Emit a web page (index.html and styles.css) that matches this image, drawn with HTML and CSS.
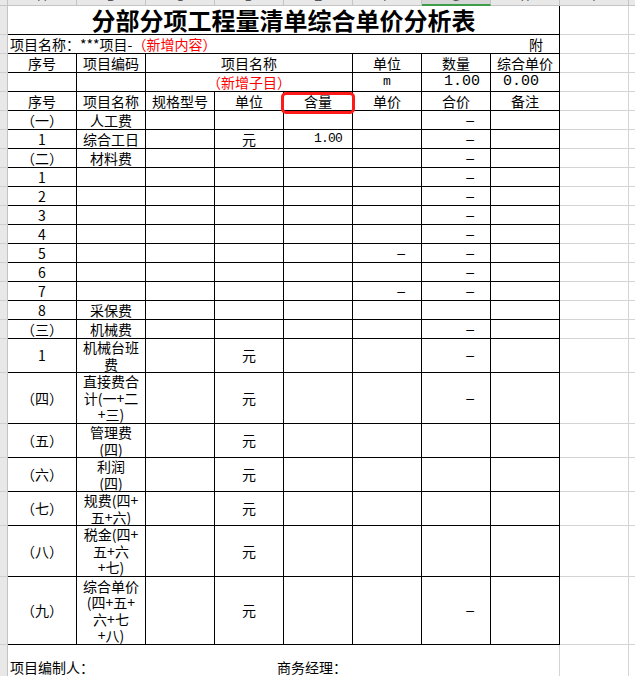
FILE: index.html
```html
<!DOCTYPE html>
<html lang="zh-CN">
<head>
<meta charset="utf-8">
<title>分部分项工程量清单综合单价分析表</title>
<link rel="stylesheet" href="styles.css">
</head>
<body>
<div class="colhead">
  <div class="corner"></div>
  <div class="ch"><span>A</span></div>
  <div class="ch"><span>B</span></div>
  <div class="ch"><span>C</span></div>
  <div class="ch"><span>D</span></div>
  <div class="ch"><span>E</span></div>
  <div class="ch"><span>F</span></div>
  <div class="ch sel"><span>G</span></div>
  <div class="ch"><span>H</span></div>
  <div class="ch"><span>I</span></div>
  <div class="ch last"><span>J</span></div>
</div>
<table class="grid">
  <colgroup>
    <col class="c-rh">
    <col class="c"><col class="c"><col class="c"><col class="c">
    <col class="c"><col class="c"><col class="c"><col class="c">
    <col class="c"><col class="c-rest">
  </colgroup>
  <tbody>
    <tr class="h28"><td class="rh"></td><td colspan="8" class="title">分部分项工程量清单综合单价分析表</td><td class="gx"></td><td class="gy"></td></tr>
    <tr class="h19"><td class="rh"></td><td colspan="8" class="left"><div class="projline"><span>项目名称：***项目-<span class="red">（新增内容）</span></span><span class="fu">附</span></div></td><td class="gx"></td><td class="gy"></td></tr>
    <tr class="h19"><td class="rh"></td><td>序号</td><td>项目编码</td><td colspan="3">项目名称</td><td>单位</td><td>数量</td><td>综合单价</td><td class="gx"></td><td class="gy"></td></tr>
    <tr class="h19"><td class="rh"></td><td></td><td></td><td colspan="3" class="red">（新增子目）</td><td class="unit">m</td><td class="num lg">1.00</td><td class="num lg wide">0.00</td><td class="gx"></td><td class="gy"></td></tr>
    <tr class="h19"><td class="rh"></td><td>序号</td><td>项目名称</td><td>规格型号</td><td>单位</td><td>含量</td><td>单价</td><td>合价</td><td>备注</td><td class="gx"></td><td class="gy"></td></tr>
    <tr class="h19"><td class="rh"></td><td>（一）</td><td>人工费</td><td></td><td></td><td></td><td></td><td class="dash">–</td><td></td><td class="gx"></td><td class="gy"></td></tr>
    <tr class="h19"><td class="rh"></td><td>1</td><td>综合工日</td><td></td><td>元</td><td class="num">1.00</td><td></td><td class="dash">–</td><td></td><td class="gx"></td><td class="gy"></td></tr>
    <tr class="h19"><td class="rh"></td><td>（二）</td><td>材料费</td><td></td><td></td><td></td><td></td><td class="dash">–</td><td></td><td class="gx"></td><td class="gy"></td></tr>
    <tr class="h19"><td class="rh"></td><td>1</td><td></td><td></td><td></td><td></td><td></td><td class="dash">–</td><td></td><td class="gx"></td><td class="gy"></td></tr>
    <tr class="h19"><td class="rh"></td><td>2</td><td></td><td></td><td></td><td></td><td></td><td class="dash">–</td><td></td><td class="gx"></td><td class="gy"></td></tr>
    <tr class="h19"><td class="rh"></td><td>3</td><td></td><td></td><td></td><td></td><td></td><td class="dash">–</td><td></td><td class="gx"></td><td class="gy"></td></tr>
    <tr class="h19"><td class="rh"></td><td>4</td><td></td><td></td><td></td><td></td><td></td><td class="dash">–</td><td></td><td class="gx"></td><td class="gy"></td></tr>
    <tr class="h19"><td class="rh"></td><td>5</td><td></td><td></td><td></td><td></td><td class="dash">–</td><td class="dash">–</td><td></td><td class="gx"></td><td class="gy"></td></tr>
    <tr class="h19"><td class="rh"></td><td>6</td><td></td><td></td><td></td><td></td><td></td><td class="dash">–</td><td></td><td class="gx"></td><td class="gy"></td></tr>
    <tr class="h19"><td class="rh"></td><td>7</td><td></td><td></td><td></td><td></td><td class="dash">–</td><td class="dash">–</td><td></td><td class="gx"></td><td class="gy"></td></tr>
    <tr class="h19"><td class="rh"></td><td>8</td><td>采保费</td><td></td><td></td><td></td><td></td><td></td><td></td><td class="gx"></td><td class="gy"></td></tr>
    <tr class="h19"><td class="rh"></td><td>（三）</td><td>机械费</td><td></td><td></td><td></td><td></td><td class="dash">–</td><td></td><td class="gx"></td><td class="gy"></td></tr>
    <tr class="h34"><td class="rh"></td><td>1</td><td>机械台班<br>费</td><td></td><td>元</td><td></td><td></td><td class="dash">–</td><td></td><td class="gx"></td><td class="gy"></td></tr>
    <tr class="h51"><td class="rh"></td><td>（四）</td><td>直接费合<br>计(一+二<br>+三)</td><td></td><td>元</td><td></td><td></td><td class="dash">–</td><td></td><td class="gx"></td><td class="gy"></td></tr>
    <tr class="h34"><td class="rh"></td><td>（五）</td><td>管理费<br>(四)</td><td></td><td>元</td><td></td><td></td><td></td><td></td><td class="gx"></td><td class="gy"></td></tr>
    <tr class="h34"><td class="rh"></td><td>（六）</td><td>利润<br>(四)</td><td></td><td>元</td><td></td><td></td><td></td><td></td><td class="gx"></td><td class="gy"></td></tr>
    <tr class="h34"><td class="rh"></td><td>（七）</td><td>规费(四+<br>五+六)</td><td></td><td>元</td><td></td><td></td><td></td><td></td><td class="gx"></td><td class="gy"></td></tr>
    <tr class="h51"><td class="rh"></td><td>（八）</td><td>税金(四+<br>五+六<br>+七)</td><td></td><td>元</td><td></td><td></td><td></td><td></td><td class="gx"></td><td class="gy"></td></tr>
    <tr class="h68"><td class="rh"></td><td>（九）</td><td>综合单价<br>(四+五+<br>六+七<br>+八)</td><td></td><td>元</td><td></td><td></td><td class="dash">–</td><td></td><td class="gx"></td><td class="gy"></td></tr>
    <tr class="h40"><td class="rh"></td><td colspan="8" class="foot"><div class="footline"><span class="f1">项目编制人：</span><span>商务经理：</span></div></td><td class="gx"></td><td class="gy"></td></tr>
  </tbody>
</table>
<div class="mark"></div>
</body>
</html>
```

FILE: styles.css
```css
* { box-sizing: border-box; }
html, body { margin: 0; padding: 0; background: #fff; overflow: hidden; }
body {
  width: 635px;
  height: 676px;
  position: relative;
  font-family: "Noto Sans CJK SC", "Noto Sans CJK JP", sans-serif;
  font-size: 14px;
  color: #000;
}

/* column header strip */
.colhead {
  display: flex;
  height: 6px;
  background: #e8e8e8;
  overflow: hidden;
  width: 660px;
}
.corner {
  flex: 0 0 8px;
  height: 6px;
  border-right: 1px solid #c4c4c4;
  border-bottom: 1px solid #c4c4c4;
}
.ch {
  flex: 0 0 69px;
  height: 6px;
  border-right: 1px solid #c4c4c4;
  border-bottom: 1px solid #c4c4c4;
  text-align: center;
  font: 12px/12px "Liberation Sans", sans-serif;
  color: #555;
  overflow: hidden;
}
.ch span { display: block; margin-top: -9px; }
.ch.sel { background: #d6d6d6; border-bottom: 2px solid #3e9c48; }
.ch.last { flex-basis: 40px; }

/* sheet */
.grid {
  border-collapse: separate;
  border-spacing: 0;
  table-layout: fixed;
  width: 649px;
}
.grid col.c-rh { width: 8px; }
.grid col.c { width: 69px; }
.grid col.c-rest { width: 20px; }
.grid td {
  padding: 0;
  border: 0;
  border-right: 1px solid #000;
  border-bottom: 1px solid #000;
  text-align: center;
  vertical-align: middle;
  line-height: 16.5px;
  white-space: nowrap;
  overflow: hidden;
}
.grid tr.h28 { height: 28px; }
.grid tr.h19 { height: 19px; }
.grid tr.h34 { height: 34px; }
.grid tr.h51 { height: 51px; }
.grid tr.h68 { height: 68px; }
.grid tr.h40 { height: 40px; }

.grid td.rh {
  background: #e8e8e8;
  border-right: 1px solid #c4c4c4;
  border-bottom: 1px solid #d0d0d0;
}
.grid td.gx { border-right: 1px solid #d4d4d4; border-bottom: 1px solid #d4d4d4; }
.grid td.gy { border-right: 0; border-bottom: 1px solid #d4d4d4; }

.grid td.title {
  font-size: 24px;
  font-weight: 700;
  line-height: 28px;
}
.grid td.left { text-align: left; }
.projline {
  display: flex;
  justify-content: space-between;
  padding: 0 16px 0 2px;
}
.red { color: #ff0000; }
.grid td.red { color: #ff0000; }
.grid td.unit { font-family: "Liberation Mono", monospace; font-size: 13px; }

.grid td.num {
  text-align: right;
  padding-right: 10px;
  font-family: "Liberation Mono", monospace;
  font-size: 13px;
  letter-spacing: -0.8px;
}
.grid td.num.lg { font-size: 15px; letter-spacing: 0; }
.grid td.num.wide { padding-right: 20px; }
.grid td.dash {
  text-align: right;
  padding-right: 16px;
  font-family: "Liberation Sans", sans-serif;
}

.grid td.foot {
  text-align: left;
  vertical-align: top;
  padding: 14px 0 0 2px;
  border-right: 1px solid #d4d4d4;
  border-bottom: 0;
}
.footline { display: flex; }
.f1 { flex: 0 0 267px; }

/* red highlight drawn over the 含量 header cell */
.mark {
  position: absolute;
  left: 281px;
  top: 92px;
  width: 74px;
  height: 22px;
  border: 3px solid #ff1a1a;
  border-radius: 5px;
}
```
